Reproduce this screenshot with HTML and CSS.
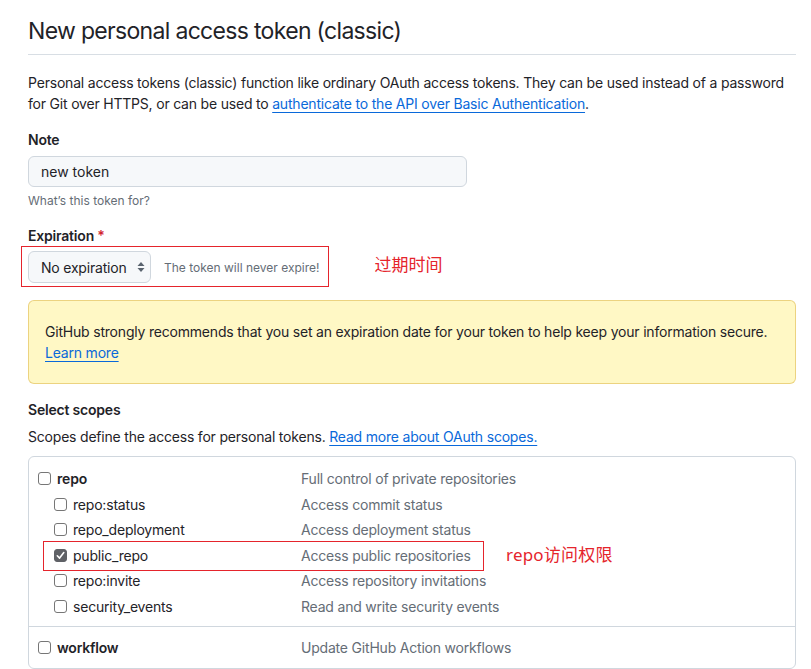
FILE: index.html
```html
<!DOCTYPE html>
<html lang="en">
<head>
<meta charset="utf-8">
<title>New personal access token (classic)</title>
<link rel="stylesheet" href="styles.css">
</head>
<body>
<main class="page">
  <h1 class="subhead">New personal access token (classic)</h1>
  <p class="intro">Personal access tokens (classic) function like ordinary OAuth access tokens. They can be used instead of a password for Git over HTTPS, or can be used to <a href="#" class="link">authenticate to the API over Basic Authentication</a>.</p>

  <div class="field">
    <label class="label">Note</label>
    <input class="input" type="text" value="new token">
    <div class="hint">What’s this token for?</div>
  </div>

  <div class="field field-exp">
    <label class="label">Expiration <span class="req">*</span></label>
    <div class="exp-row">
      <div class="annot-box">
        <div class="select">No expiration
          <svg class="arrows" width="8" height="12" viewBox="0 0 8 12"><path d="M4 1 L7.5 5 H0.5 Z M4 11 L7.5 7 H0.5 Z" fill="#59636e"/></svg>
        </div>
        <span class="exp-note">The token will never expire!</span>
      </div>
      <span class="annot-text">过期时间</span>
    </div>
  </div>

  <div class="flash">GitHub strongly recommends that you set an expiration date for your token to help keep your information secure. <a href="#" class="link">Learn more</a></div>

  <h2 class="label scopes-title">Select scopes</h2>
  <p class="scopes-desc">Scopes define the access for personal tokens. <a href="#" class="link">Read more about OAuth scopes.</a></p>

  <div class="scopes">
    <div class="group">
      <div class="row top"><span class="cb"></span><span class="name">repo</span><span class="desc">Full control of private repositories</span></div>
      <div class="row sub"><span class="cb"></span><span class="name">repo:status</span><span class="desc">Access commit status</span></div>
      <div class="row sub"><span class="cb"></span><span class="name">repo_deployment</span><span class="desc">Access deployment status</span></div>
      <div class="row sub marked"><span class="cb checked"><svg width="9" height="9" viewBox="0 0 9 9"><path d="M1.3 4.8 L3.6 7.1 L7.8 1.6" fill="none" stroke="#fff" stroke-width="1.6" stroke-linecap="round" stroke-linejoin="round"/></svg></span><span class="name">public_repo</span><span class="desc">Access public repositories</span>
        <span class="annot-outline"></span><span class="annot-side">repo访问权限</span>
      </div>
      <div class="row sub"><span class="cb"></span><span class="name">repo:invite</span><span class="desc">Access repository invitations</span></div>
      <div class="row sub"><span class="cb"></span><span class="name">security_events</span><span class="desc">Read and write security events</span></div>
    </div>
    <div class="group">
      <div class="row top"><span class="cb"></span><span class="name">workflow</span><span class="desc">Update GitHub Action workflows</span></div>
    </div>
  </div>
</main>
</body>
</html>
```

FILE: styles.css
```css
* { box-sizing: border-box; }
html, body { margin: 0; padding: 0; background: #fff; }
body {
  font-family: Inter, "Noto Sans", "Liberation Sans", sans-serif;
  color: #1f2328;
  font-size: 14px;
  line-height: 21px;
  letter-spacing: -0.2px;
  overflow: hidden;
  height: 669px;
}
.page { padding: 16px 15px 0 28px; }
.subhead {
  margin: 0;
  font-size: 23px;
  font-weight: 400;
  line-height: 30px;
  padding-bottom: 8px;
  border-bottom: 1px solid #d8dee4;
  letter-spacing: -0.68px;
}
.intro { margin: 17px 0 0; }
.link { color: #0969da; text-decoration: underline; text-underline-offset: 3px; }
.field { margin-top: 15px; }
.label { display: block; font-size: 14px; font-weight: 600; margin: 0; line-height: 21px; }
.input {
  display: block;
  margin-top: 6px;
  width: 439px;
  height: 31px;
  padding: 0 12px;
  font: inherit;
  color: #1f2328;
  background: #f6f8fa;
  border: 1px solid #d0d7de;
  border-radius: 6px;
}
.hint { margin-top: 5px; font-size: 12px; line-height: 18px; color: #656d76; letter-spacing: 0; }
.field-exp { margin-top: 15px; }
.req { color: #d1242f; }
.exp-row { display: flex; align-items: center; }
.annot-box {
  display: flex;
  align-items: center;
  margin-left: -7px;
  padding: 4px 9px 3px 6px;
  border: 1px solid #e5242c;
}
.select {
  display: flex;
  align-items: center;
  justify-content: space-between;
  width: 123px;
  height: 32px;
  padding: 0 5px 0 12px;
  background: #f6f8fa;
  border: 1px solid #d0d7de;
  border-radius: 6px;
}
.arrows { display: block; }
.exp-note { margin-left: 13px; font-size: 12px; color: #656d76; letter-spacing: 0; }
.annot-text {
  margin-left: 45px;
  margin-top: -6px;
  font-family: "Noto Sans CJK SC", sans-serif;
  color: #e5242c;
  font-size: 17px;
  letter-spacing: 0;
}
.flash {
  margin-top: 13px;
  padding: 20px 16px;
  background: #fff8c5;
  border: 1px solid rgba(212, 167, 44, 0.45);
  border-radius: 6px;
  line-height: 21px;
}
.scopes-title { margin-top: 15px; }
.scopes-desc { margin: 6px 0 0; }
.scopes {
  margin-top: 9px;
  border: 1px solid #d0d7de;
  border-radius: 6px;
}
.group { padding: 9px 0 7px 9px; }
.group + .group { border-top: 1px solid #d0d7de; padding-top: 8px; }
.row {
  position: relative;
  display: flex;
  align-items: center;
  height: 25.5px;
}
.row.sub { padding-left: 16px; }
.cb {
  flex: none;
  width: 13px;
  height: 13px;
  border: 1px solid #767676;
  border-radius: 3px;
  background: #fff;
  margin-right: 6px;
  display: flex;
  align-items: center;
  justify-content: center;
}
.cb.checked { background: #5f6166; border-color: #5f6166; }
.cb svg { display: block; }
.name { width: 244px; }
.row.sub .name { width: 228px; }
.row.top .name { font-weight: 600; }
.desc { color: #656d76; }
.annot-outline {
  position: absolute;
  left: 5px;
  top: -2px;
  width: 441px;
  height: 30px;
  border: 1px solid #e5242c;
  pointer-events: none;
}
.annot-side {
  position: absolute;
  left: 468px;
  top: 0;
  color: #e5242c;
  font-size: 17px;
  letter-spacing: 0.2px;
  font-family: "Noto Sans", "Noto Sans CJK SC", sans-serif;
  line-height: 24px;
}
```
